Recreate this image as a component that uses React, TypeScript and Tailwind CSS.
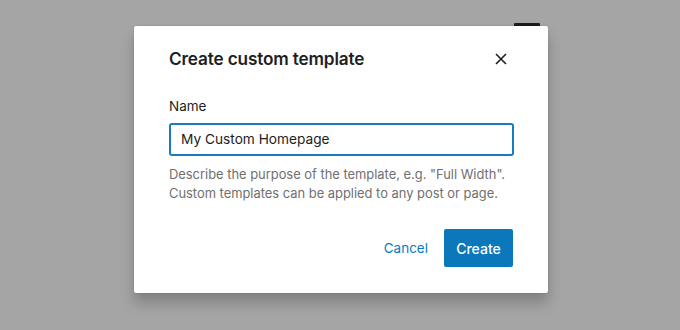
import React from "react";

export default function App() {
  return (
    <div
      className="relative w-[680px] h-[330px] overflow-hidden bg-[#a5a5a5]"
      style={{ fontFamily: "Inter, 'Noto Sans', Arial, sans-serif" }}
    >
      <div className="absolute left-[514px] top-[23px] w-[26px] h-[8px] rounded-[1px] bg-[#1e1e1e]" />
      <div className="absolute left-[134px] top-[26px] w-[414px] h-[267px] bg-white rounded-[2px] shadow-[0_10px_14px_rgba(0,0,0,0.22),0_0_2px_rgba(0,0,0,0.15)] pl-[35px] pr-[34px] pt-[21px] flex flex-col">
        <div className="flex items-center justify-between h-[24px]">
          <h1 className="text-[17.2px] leading-[24px] font-semibold text-[#1e1e1e] tracking-[-0.15px]">
            Create custom template
          </h1>
          <button className="w-[24px] h-[24px] flex items-center justify-center text-[#1e1e1e] mr-[1px]">
            <svg width="24" height="24" viewBox="0 0 24 24" fill="none">
              <path d="M7 7l10 10M17 7L7 17" stroke="currentColor" strokeWidth="1.6" />
            </svg>
          </button>
        </div>
        <label className="mt-[25px] text-[13.5px] leading-[20px] text-[#1e1e1e]">Name</label>
        <div className="mt-[7px] w-[345px] h-[33px] rounded-[3px] border-2 border-[#1a7cbf] flex items-center pl-[10px] text-[13.7px] text-[#1e1e1e]">
          My Custom Homepage
        </div>
        <p className="mt-[9px] text-[12.9px] leading-[19px] text-[#707070]">
          Describe the purpose of the template, e.g. "Full Width".
          <br />
          Custom templates can be applied to any post or page.
        </p>
        <div className="mt-[26px] flex items-center justify-end gap-[16px] pr-[1px]">
          <button className="h-[38px] text-[13.5px] text-[#0b7bbf]">Cancel</button>
          <button className="h-[38px] w-[69px] rounded-[2px] bg-[#0a78bb] text-white text-[14px] font-medium">
            Create
          </button>
        </div>
      </div>
    </div>
  );
}
